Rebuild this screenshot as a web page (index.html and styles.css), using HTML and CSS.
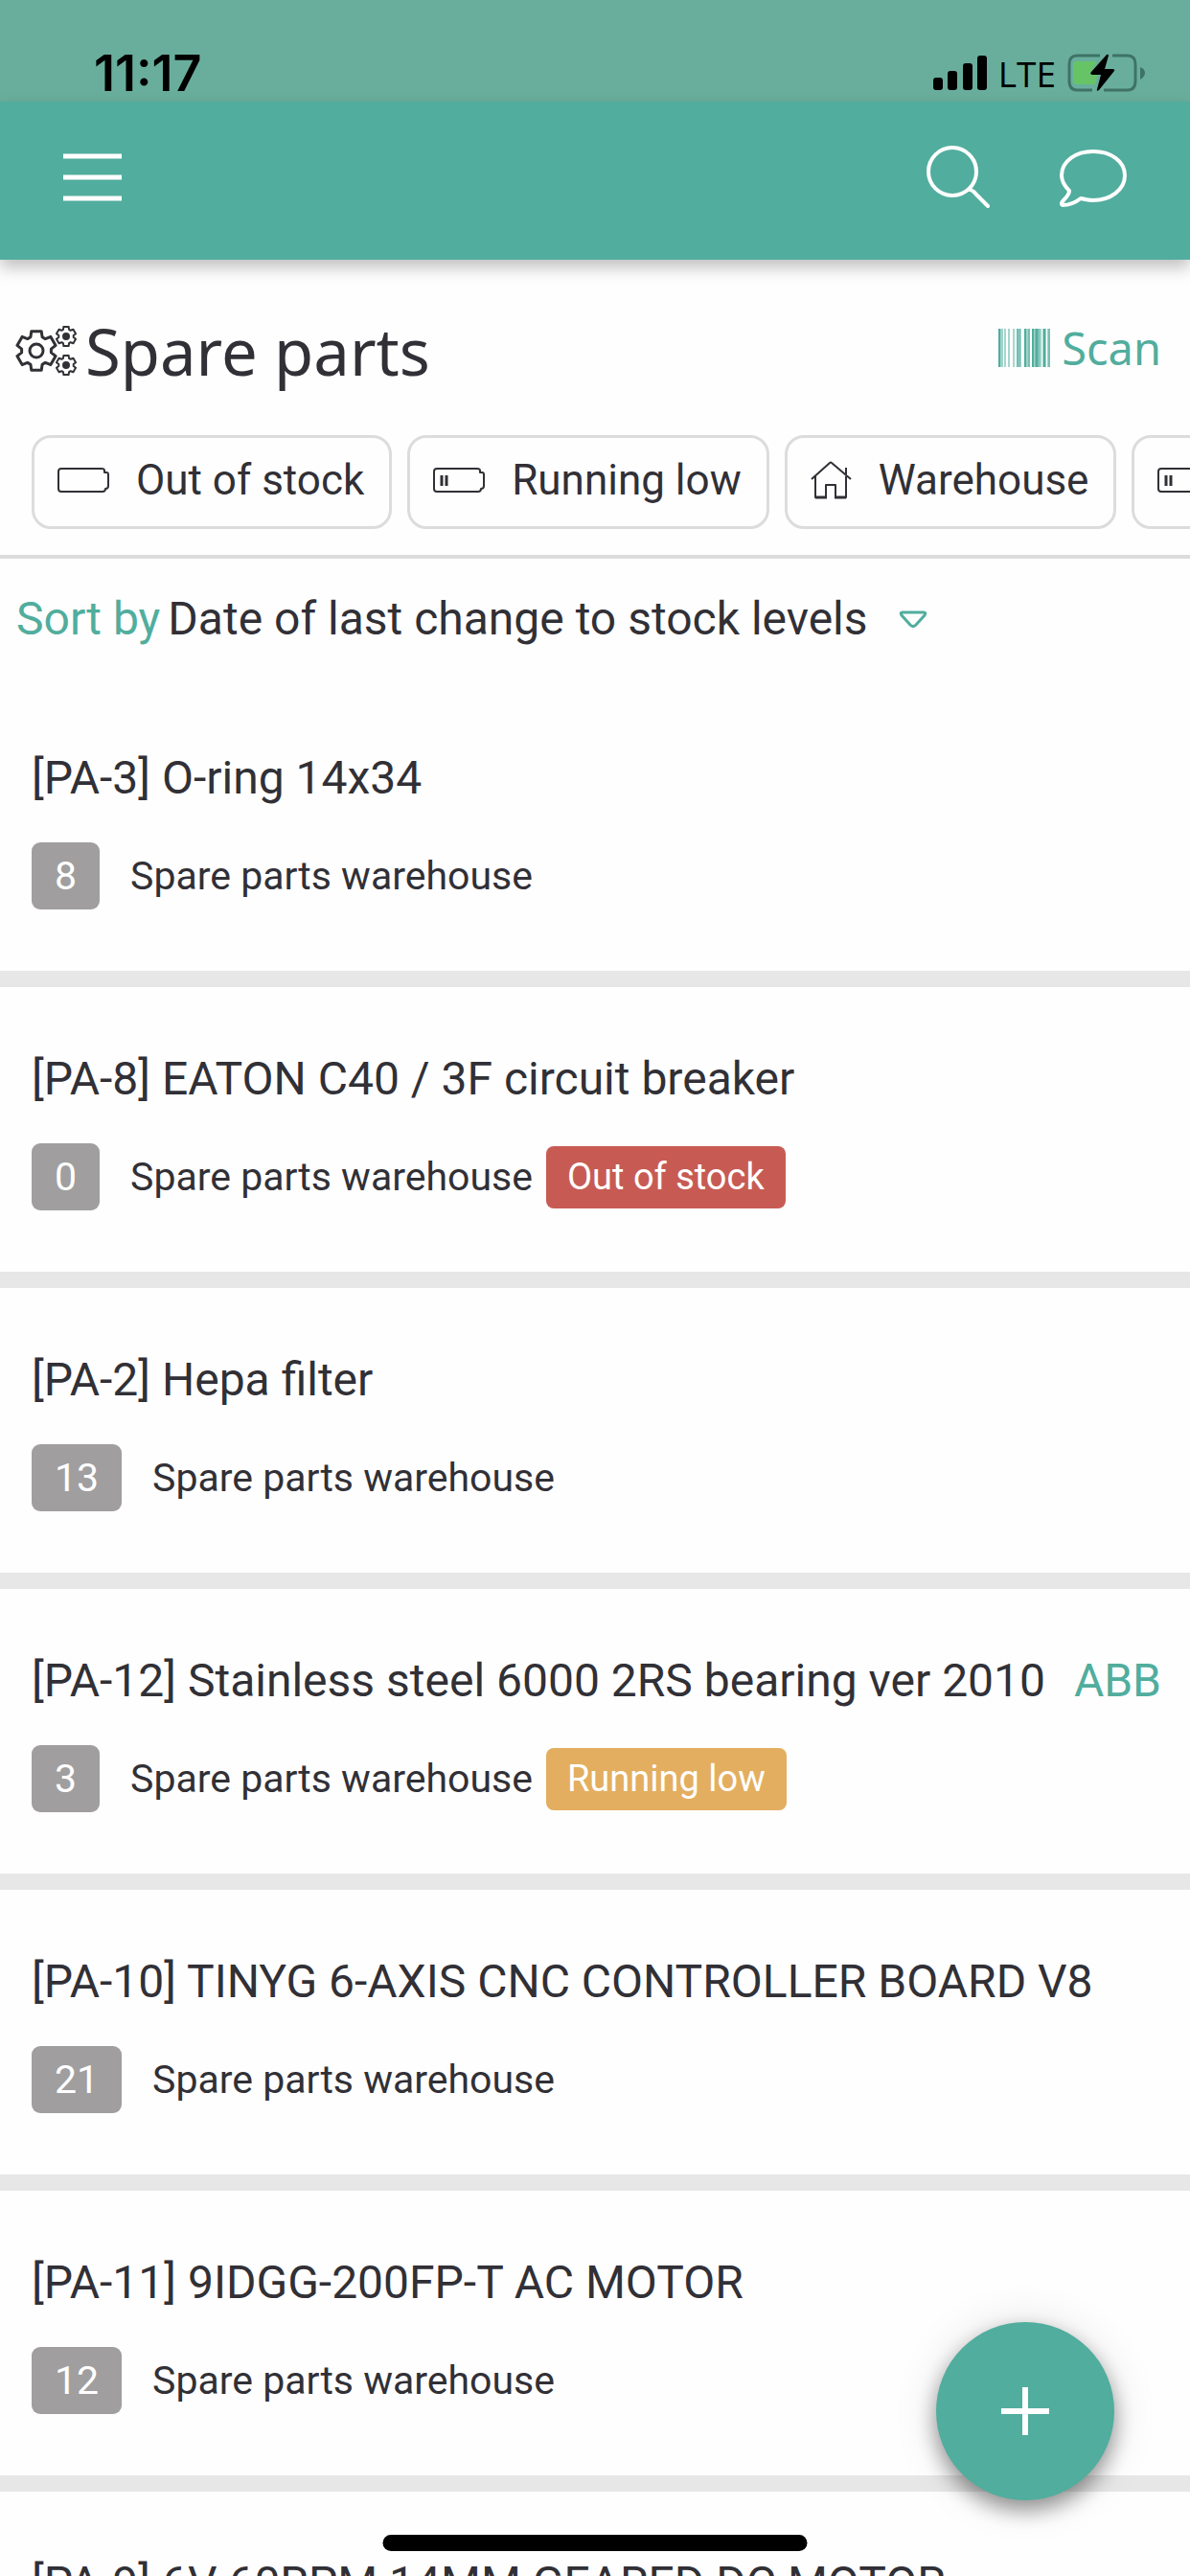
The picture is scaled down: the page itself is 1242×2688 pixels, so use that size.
FILE: index.html
```html
<!DOCTYPE html>
<html lang="en">
<head>
  <meta charset="UTF-8">
  <meta name="viewport" content="width=device-width, initial-scale=1">
  <title>Spare parts</title>
  <link rel="stylesheet" href="styles.css">
</head>
<body>
  <svg class="sprite" aria-hidden="true">
    <symbol id="gear" viewBox="-22 -22 44 44">
      <path vector-effect="non-scaling-stroke" d="M-6.1-14.3L-5.2-20.2H5.2L6.1-14.3L9.3-12.4L14.9-14.6L20.1-5.6L15.4-1.9V1.9L20.1 5.6L14.9 14.6L9.3 12.4L6.1 14.3L5.2 20.2H-5.2L-6.1 14.3L-9.3 12.4L-14.9 14.6L-20.1 5.6L-15.4 1.9V-1.9L-20.1-5.6L-14.9-14.6L-9.3-12.4Z"/>
    </symbol>
    <symbol id="battery" viewBox="0 0 54 28">
      <path d="M4 2H46Q49 2 49 4V6H51Q53 6 53 8V20Q53 23 50 23Q50 26 47 26H4Q1 26 1 23V5Q1 2 4 2Z"/>
    </symbol>
    <symbol id="battery-low" viewBox="0 0 54 28">
      <path d="M4 2H46Q49 2 49 4V6H51Q53 6 53 8V20Q53 23 50 23Q50 26 47 26H4Q1 26 1 23V5Q1 2 4 2Z"/>
      <path d="M9 9V20M14 9V20" stroke-width="3"/>
    </symbol>
  </svg>

  <div class="status-bar">
    <span class="time">11:17</span>
    <div class="status-icons">
      <svg width="56" height="36" viewBox="0 0 56 36">
        <rect x="0" y="23" width="10" height="13" rx="3"/>
        <rect x="15" y="16" width="10" height="20" rx="3"/>
        <rect x="31" y="8" width="10" height="28" rx="3"/>
        <rect x="46" y="0" width="10" height="36" rx="3"/>
      </svg>
      <span class="network">LTE</span>
      <svg width="82" height="40" viewBox="0 0 82 40">
        <path d="M34 2H10Q2 2 2 11V28Q2 38 10 38H26M47 2H63Q71 2 71 11V28Q71 38 63 38H38" fill="none" stroke="#3f7366" stroke-width="3"/>
        <path d="M76 14Q81 16 81 20T76 27Z" fill="#3f7366"/>
        <path d="M10 8H31L23 22H31L29 32H10Q6 32 6 28V12Q6 8 10 8Z" fill="#66c466"/>
        <path d="M41 1Q43 0 43 2L39 16H48Q50 17 49 18L33 38Q30 40 31 37L35 22H26Q23 21 25 19Z"/>
      </svg>
    </div>
  </div>

  <header class="navbar">
    <button class="icon-btn" aria-label="Menu">
      <svg width="61" height="51" viewBox="0 0 61 51">
        <path d="M0 3H61M0 25H61M0 47H61" stroke="#fff" stroke-width="5"/>
      </svg>
    </button>
    <div class="nav-actions">
      <button class="icon-btn" aria-label="Search">
        <svg width="67" height="67" viewBox="0 0 67 67">
          <circle cx="27" cy="27" r="25"/>
          <path d="M45 46Q48 46 52 51L64 63"/>
        </svg>
      </button>
      <button class="icon-btn" aria-label="Messages">
        <svg width="70" height="62" viewBox="0 0 70 62">
          <path d="M22 52C17 56 10 59 3 59C1 58 2 56 4 54C8 50 10 47 10 44C5 39 2 34 2 28C2 13 17 3 35 3S68 13 68 28S53 54 35 54C30 54 26 53 22 52Z"/>
        </svg>
      </button>
    </div>
  </header>

  <main>
    <div class="heading">
      <svg class="gears" width="64" height="52" viewBox="0 0 64 52">
        <use class="big" href="#gear" x="0" y="4" width="44" height="44"/>
        <circle class="big" cx="22" cy="26" r="7"/>
        <use href="#gear" x="42" y="0" width="22" height="22"/>
        <circle class="dot" cx="53" cy="11" r="3"/>
        <use href="#gear" x="42" y="30" width="22" height="22"/>
        <circle class="dot" cx="53" cy="41" r="3"/>
      </svg>
      <h1>Spare parts</h1>
      <button class="scan">
        <svg width="54" height="40" viewBox="0 0 54 40">
          <path d="M3 0V40M31 0V40M37 0V40M43 0V40M48 0V40M53 0V40" stroke="#9fd4ca" stroke-width="4"/>
          <path d="M21 0V40" stroke="#8fcdc2" stroke-width="4"/>
          <path d="M1 0V40M7 0V40M11 0V40M16 0V40M20 0V40M23 0V40M28 0V40M32 0V40M36 0V40M39 0V40M42 0V40M48 0V40M53 0V40" stroke="#51ad9d" stroke-width="1"/>
          <path d="M1 0V40M28 0V40M36 0V40M40 0V40M48 0V40" stroke="#51ad9d" stroke-width="2"/>
        </svg>
        Scan
      </button>
    </div>

    <div class="filters">
      <button class="chip"><svg width="54" height="28"><use href="#battery"/></svg>Out of stock</button>
      <button class="chip"><svg width="54" height="28"><use href="#battery-low"/></svg>Running low</button>
      <button class="chip">
        <svg width="43" height="40" viewBox="0 0 43 40">
          <path d="M1 19L20 2Q21 1 22 2L42 19M37 15V7M5 16V38H16V25H26V38H37V16"/>
          <path d="M5 38H17M25 38H37" stroke-width="3"/>
        </svg>
        Warehouse
      </button>
      <button class="chip" aria-label="Low stock"><svg width="54" height="28"><use href="#battery-low"/></svg></button>
    </div>

    <div class="sort">
      <label for="sort">Sort by</label>
      <select id="sort">
        <option>Date of last change to stock levels</option>
      </select>
      <svg width="30" height="18" viewBox="0 0 30 18">
        <path d="M4 2H26Q29 2 27 5L18 15Q15 18 12 15L3 5Q1 2 4 2Z"/>
      </svg>
    </div>

    <ul class="parts">
      <li>
        <h2>[PA-3] O-ring 14x34</h2>
        <div class="stock"><span class="qty">8</span>Spare parts warehouse</div>
      </li>
      <li>
        <h2>[PA-8] EATON C40 / 3F circuit breaker</h2>
        <div class="stock"><span class="qty">0</span>Spare parts warehouse<span class="tag out">Out of stock</span></div>
      </li>
      <li>
        <h2>[PA-2] Hepa filter</h2>
        <div class="stock"><span class="qty">13</span>Spare parts warehouse</div>
      </li>
      <li>
        <h2>[PA-12] Stainless steel 6000 2RS bearing ver 2010 <a href="#">ABB</a></h2>
        <div class="stock"><span class="qty">3</span>Spare parts warehouse<span class="tag low">Running low</span></div>
      </li>
      <li>
        <h2>[PA-10] TINYG 6-AXIS CNC CONTROLLER BOARD V8</h2>
        <div class="stock"><span class="qty">21</span>Spare parts warehouse</div>
      </li>
      <li>
        <h2>[PA-11] 9IDGG-200FP-T AC MOTOR</h2>
        <div class="stock"><span class="qty">12</span>Spare parts warehouse</div>
      </li>
      <li>
        <h2>[PA-9] 6V 60RPM 14MM GEARED DC MOTOR</h2>
      </li>
    </ul>
  </main>

  <button class="fab" aria-label="Add part">
    <svg width="50" height="50" viewBox="0 0 50 50">
      <path d="M0 25H50M25 0V50" stroke="#fff" stroke-width="6"/>
    </svg>
  </button>
  <div class="home-indicator"></div>
</body>
</html>
```
FILE: styles.css
```css
* {
  box-sizing: border-box;
}

body {
  margin: 0;
  height: 100vh;
  overflow: hidden;
  background-color: #fefefe;
  color: #313036;
  font-family: Roboto, sans-serif;
  font-size: 48px;
}

button,
select {
  font: inherit;
  color: inherit;
  background: none;
  border: none;
  padding: 0;
  cursor: pointer;
}

svg {
  display: block;
  flex-shrink: 0;
}

.sprite {
  position: absolute;
  width: 0;
  height: 0;
}

/* top bars */
.status-bar {
  display: flex;
  justify-content: space-between;
  align-items: center;
  padding: 46px 46px 0 98px;
  height: 106px;
  background-color: #69ae9c;
  color: #000;
}

.time {
  font-family: Inter, sans-serif;
  font-size: 52px;
  font-weight: 600;
}

.status-icons {
  display: flex;
  align-items: center;
  gap: 12px;
}

.network {
  font-family: "Open Sans", sans-serif;
  font-size: 37px;
  font-weight: 500;
}

.navbar {
  display: flex;
  justify-content: space-between;
  align-items: center;
  height: 165px;
  padding: 0 66px 6px;
  background-color: #51ad9d;
  box-shadow: 0 8px 16px rgba(0, 0, 0, 0.25);
}

.nav-actions {
  display: flex;
  align-items: center;
  gap: 72px;
}

.nav-actions svg {
  fill: none;
  stroke: #fff;
  stroke-width: 4;
  stroke-linecap: round;
  stroke-linejoin: round;
}

/* page title */
.heading {
  display: flex;
  align-items: center;
  padding: 48px 30px 0 16px;
  height: 141px;
}

.gears {
  fill: none;
  stroke: #313036;
  stroke-width: 2;
  stroke-linejoin: round;
}

.gears .big {
  stroke-width: 3;
}

.gears .dot {
  fill: #313036;
}

h1 {
  flex: 1;
  margin: 0 0 0 9px;
  font-family: "Noto Sans", sans-serif;
  font-size: 67px;
  font-weight: 400;
  line-height: 92px;
}

.scan {
  display: flex;
  align-items: center;
  gap: 12px;
  padding-bottom: 6px;
  color: #51ad9d;
  font-family: "Noto Sans", sans-serif;
  font-size: 47px;
}

/* filters */
.filters {
  display: flex;
  gap: 16px;
  padding: 42px 0 27px 33px;
  border-bottom: 4px solid #dcdcdc;
  overflow: hidden;
}

.chip {
  display: flex;
  flex-shrink: 0;
  align-items: center;
  gap: 28px;
  padding: 18px 26px 22px 24px;
  border: 3px solid #dcdcdc;
  border-radius: 20px;
  font-size: 44px;
  line-height: 52px;
}

.chip svg {
  fill: none;
  stroke: #313036;
  stroke-width: 2;
  stroke-linejoin: round;
}

/* sorting */
.sort {
  display: flex;
  align-items: center;
  padding: 35px 17px 42px;
  line-height: 56px;
}

.sort label {
  margin-right: 8px;
  color: #51ad9d;
}

.sort select {
  appearance: none;
  margin-right: 32px;
}

.sort svg {
  fill: none;
  stroke: #51ad9d;
  stroke-width: 3;
}

/* list */
.parts {
  margin: 0;
  padding: 0;
  list-style: none;
}

.parts li {
  padding: 68px 30px 64px 33px;
  border-bottom: 17px solid #e7e7e7;
}

h2 {
  display: flex;
  justify-content: space-between;
  margin: 0 0 39px;
  font-size: 48px;
  font-weight: 400;
  line-height: 56px;
  white-space: nowrap;
}

h2 a {
  color: #51ad9d;
  text-decoration: none;
}

.stock {
  display: flex;
  align-items: center;
  font-size: 41px;
  line-height: 70px;
}

.qty {
  margin-right: 32px;
  padding: 0 24px;
  border-radius: 9px;
  background-color: #a09e9f;
  color: #fff;
}

.tag {
  margin-left: 14px;
  padding: 0 22px;
  border-radius: 8px;
  color: #fff;
  font-size: 38px;
  line-height: 65px;
}

.out {
  background-color: #c75b54;
}

.low {
  background-color: #e3ae60;
}

/* floating things */
.fab {
  position: fixed;
  right: 79px;
  bottom: 79px;
  display: flex;
  justify-content: center;
  align-items: center;
  width: 186px;
  height: 186px;
  border-radius: 50%;
  background-color: #51ad9d;
  box-shadow: 0 10px 22px rgba(0, 0, 0, 0.4), 0 2px 48px rgba(0, 0, 0, 0.12);
}

.home-indicator {
  position: fixed;
  left: 50%;
  bottom: 26px;
  width: 443px;
  height: 17px;
  border-radius: 9px;
  background-color: #000;
  transform: translateX(-50%);
}
```
